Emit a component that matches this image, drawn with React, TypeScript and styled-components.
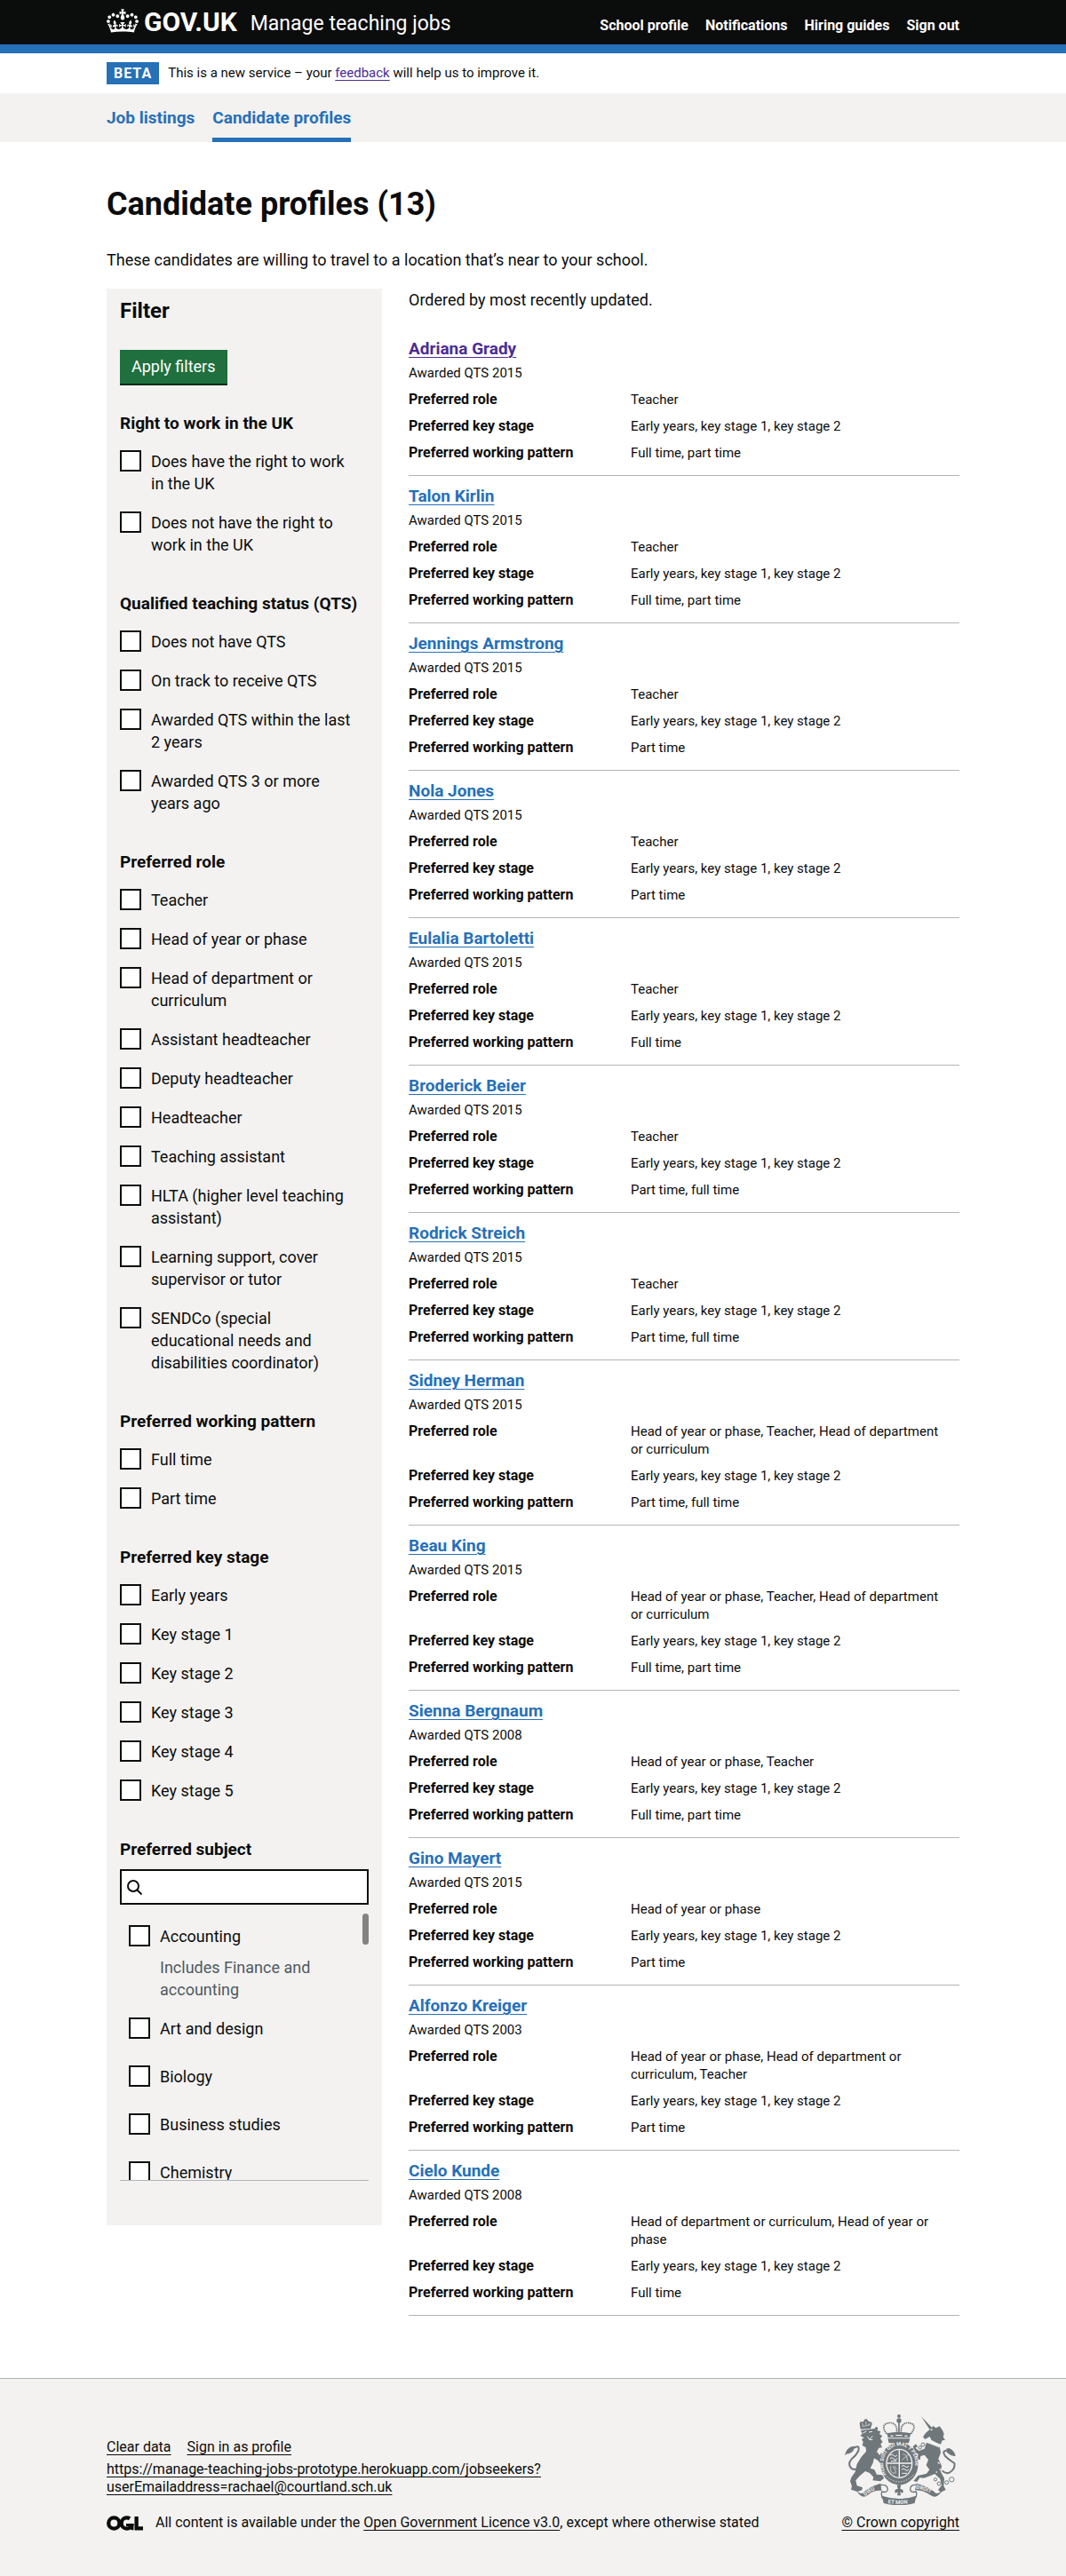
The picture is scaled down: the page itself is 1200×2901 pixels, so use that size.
import React from "react";
import styled, { createGlobalStyle } from "styled-components";

const ink = "#0b0c0c";
const blue = "#2670b8";
const green = "#1f703e";
const visited = "#4c2c92";
const pale = "#f3f2f1";
const rule = "#b1b4b6";
const slate = "#505a5f";
const sans = 'Roboto, "Liberation Sans", Arial, sans-serif';

const GlobalStyle = createGlobalStyle`
  *, *::before, *::after { box-sizing: border-box; }
  body {
    margin: 0;
    background: #ffffff;
    color: ${ink};
    font-family: ${sans};
    font-size: 18px;
    line-height: 25px;
  }
  h1, h2, h3, p, ul, dl, dd, fieldset { margin: 0; padding: 0; }
  fieldset { border: 0; min-width: 0; }
  ul { list-style: none; }
`;

const Container = styled.div`
  max-width: 1020px;
  margin: 0 auto;
  padding: 0 30px;
`;

const Header = styled.header`
  background: ${ink};
  border-bottom: 10px solid ${blue};
  color: #ffffff;
`;

const HeaderRow = styled(Container)`
  display: flex;
  flex-wrap: wrap;
  align-items: center;
  min-height: 50px;
`;

const HomeLink = styled.a`
  display: flex;
  align-items: flex-start;
  gap: 6px;
  color: #ffffff;
  font-size: 30px;
  font-weight: 700;
  line-height: 30px;
  text-decoration: none;
`;

const ServiceLink = styled.a`
  margin-left: 15px;
  padding-top: 4px;
  color: #ffffff;
  font-size: 23px;
  line-height: 30px;
  text-decoration: none;
`;

const HeaderNav = styled.nav`
  display: flex;
  gap: 19px;
  margin-left: auto;
  padding-top: 8px;
`;

const HeaderNavLink = styled.a`
  color: #ffffff;
  font-size: 16px;
  font-weight: 700;
  line-height: 20px;
  text-decoration: none;
`;

const PhaseBanner = styled(Container)`
  display: flex;
  align-items: center;
  gap: 10px;
  padding-top: 10px;
  padding-bottom: 10px;
  font-size: 15px;
`;

const Tag = styled.strong`
  padding: 0 8px;
  background: ${blue};
  color: #ffffff;
  font-size: 16px;
  line-height: 25px;
  letter-spacing: 1px;
`;

const TextLink = styled.a<{ $colour?: string }>`
  color: ${(p) => p.$colour ?? ink};
  text-decoration: underline;
  text-decoration-thickness: 1px;
  text-underline-offset: 3px;
`;

const PrimaryNav = styled.nav`
  background: ${pale};
`;

const PrimaryNavList = styled(Container).attrs({ as: "ul" })`
  display: flex;
  gap: 20px;
`;

const PrimaryNavLink = styled.a<{ $current?: boolean }>`
  display: block;
  padding: 15px 0 10px;
  border-bottom: 5px solid ${(p) => (p.$current ? blue : "transparent")};
  color: ${blue};
  font-size: 19px;
  font-weight: 700;
  text-decoration: none;
`;

const Main = styled(Container).attrs({ as: "main" })`
  padding-top: 50px;
  padding-bottom: 70px;
`;

const PageTitle = styled.h1`
  margin-bottom: 30px;
  font-size: 36px;
  line-height: 40px;
`;

const Columns = styled.div`
  display: grid;
  grid-template-columns: minmax(0, 310fr) minmax(0, 620fr);
  align-items: start;
  gap: 30px;
  margin-top: 20px;
  @media (max-width: 760px) {
    grid-template-columns: minmax(0, 1fr);
  }
`;

const FilterPanel = styled.form`
  padding: 10px 15px 50px;
  background: ${pale};
`;

const FilterTitle = styled.h2`
  margin-bottom: 29px;
  font-size: 24px;
  line-height: 30px;
`;

const ApplyButton = styled.button`
  display: block;
  margin: 0 0 32px;
  padding: 6px 13px 7px;
  border: 0;
  border-radius: 0;
  background: ${green};
  box-shadow: 0 2px 0 #002d18;
  color: #ffffff;
  font: inherit;
`;

const FilterGroup = styled.fieldset`
  & + & {
    margin-top: 30px;
  }
`;

const Legend = styled.legend`
  margin-bottom: 10px;
  padding: 0;
  font-size: 19px;
  font-weight: 700;
`;

const Option = styled.div<{ $roomy?: boolean }>`
  display: grid;
  grid-template-columns: 24px minmax(0, 1fr);
  column-gap: 11px;
  padding: 8px 15px ${(p) => (p.$roomy ? 21 : 11)}px 0;
`;

const Checkbox = styled.input`
  appearance: none;
  width: 24px;
  height: 24px;
  margin: 0;
  border: 2px solid ${ink};
  border-radius: 0;
  background: #ffffff;
`;

const Hint = styled.div`
  grid-column: 2;
  margin-top: 10px;
  margin-bottom: -10px;
  color: ${slate};
`;

const SearchBox = styled.div`
  display: flex;
  align-items: center;
  gap: 6px;
  height: 40px;
  padding: 0 5px;
  border: 2px solid ${ink};
  background: #ffffff;
`;

const SearchInput = styled.input`
  flex: 1;
  min-width: 0;
  height: 100%;
  padding: 0;
  border: 0;
  outline: 0;
  background: transparent;
  font: inherit;
`;

const SubjectArea = styled.div`
  position: relative;
  margin-top: 10px;
  border-bottom: 1px solid ${rule};
`;

const SubjectList = styled.div`
  height: 300px;
  padding: 5px 10px;
  overflow-y: auto;
  scrollbar-width: none;
`;

const ScrollThumb = styled.span`
  position: absolute;
  top: 0;
  right: 0;
  width: 7px;
  height: 35px;
  border-radius: 4px;
  background: #838382;
`;

const Results = styled.section`
  display: grid;
  gap: 30px;
`;

const Candidate = styled.li`
  padding-bottom: 15px;
  border-bottom: 1px solid ${rule};
  & + & {
    padding-top: 10px;
  }
`;

const CandidateName = styled.h3`
  margin-bottom: 5px;
  font-size: 19px;
  line-height: 25px;
`;

const Small = styled.p`
  font-size: 15px;
  line-height: 20px;
`;

const Details = styled.dl`
  display: grid;
  grid-template-columns: minmax(0, 250fr) minmax(0, 370fr);
  row-gap: 10px;
  margin-top: 10px;
  line-height: 20px;
`;

const Term = styled.dt`
  font-size: 16px;
  font-weight: 700;
`;

const Value = styled.dd`
  padding-right: 15px;
  font-size: 15px;
`;

const Footer = styled.footer`
  border-top: 1px solid ${rule};
  background: ${pale};
  font-size: 16px;
  line-height: 20px;
`;

const FooterRow = styled(Container)`
  display: flex;
  flex-wrap: wrap;
  align-items: flex-end;
  justify-content: space-between;
  gap: 30px;
  padding-top: 40px;
  padding-bottom: 50px;
`;

const FooterLinks = styled.div`
  display: flex;
  gap: 18px;
  margin-bottom: 5px;
`;

const FooterUrl = styled.p`
  max-width: 500px;
  margin-bottom: 20px;
`;

const Licence = styled.div`
  display: flex;
  align-items: center;
  gap: 14px;
`;

const Copyright = styled.a`
  display: grid;
  justify-items: center;
  gap: 10px;
  color: ${ink};
  text-decoration: underline;
  text-decoration-thickness: 1px;
  text-underline-offset: 3px;
`;

const Crown = () => (
  <svg width="36" height="27" viewBox="0 0 132 97" aria-hidden="true">
    <path
      fill="currentColor"
      d="M25 30.2c3.5 1.5 7.7-.2 9.1-3.7 1.5-3.6-.2-7.8-3.9-9.2-3.6-1.4-7.6.3-9.1 3.9-1.4 3.5.3 7.5 3.9 9zM9 39.5c3.6 1.5 7.8-.2 9.2-3.7 1.5-3.6-.2-7.8-3.9-9.1-3.6-1.5-7.6.2-9.1 3.8-1.4 3.5.3 7.5 3.8 9zM4.4 57.2c3.5 1.5 7.7-.2 9.1-3.8 1.5-3.6-.2-7.7-3.9-9.1-3.5-1.5-7.6.3-9.1 3.8-1.4 3.5.3 7.6 3.9 9.1zm38.3-21.4c3.5 1.5 7.7-.2 9.1-3.8 1.5-3.6-.2-7.7-3.9-9.1-3.6-1.5-7.6.3-9.1 3.8-1.3 3.6.4 7.7 3.9 9.1zm64.4-5.6c-3.6 1.5-7.8-.2-9.1-3.7-1.5-3.6.2-7.8 3.8-9.2 3.6-1.4 7.7.3 9.2 3.9 1.3 3.5-.4 7.5-3.9 9zm15.9 9.3c-3.6 1.5-7.7-.2-9.1-3.7-1.5-3.6.2-7.8 3.7-9.1 3.6-1.5 7.7.2 9.2 3.8 1.5 3.5-.3 7.5-3.8 9zm4.7 17.7c-3.6 1.5-7.8-.2-9.2-3.8-1.5-3.6.2-7.7 3.9-9.1 3.6-1.5 7.7.3 9.2 3.8 1.3 3.5-.4 7.6-3.9 9.1zM89.3 35.8c-3.6 1.5-7.8-.2-9.2-3.8-1.4-3.6.2-7.7 3.9-9.1 3.6-1.5 7.7.3 9.2 3.8 1.4 3.6-.3 7.7-3.9 9.1zM69.7 17.7l8.9 4.7V9.3l-8.9 2.8c-.2-.3-.5-.6-.9-.9L72.4 0H59.6l3.5 11.2c-.3.3-.6.5-.9.9l-8.8-2.8v13.1l8.8-4.7c.3.3.6.7.9.9l-5 15.4v.1c-.2.8-.4 1.6-.4 2.4 0 4.1 3.1 7.5 7 8.1h.2c.3 0 .7.1 1 .1.4 0 .7 0 1-.1h.2c4-.6 7.1-4.1 7.1-8.1 0-.8-.1-1.7-.4-2.4V34l-5.1-15.4c.4-.2.7-.6 1-.9zM66 92.8c16.9 0 32.8 1.1 47.1 3.2 4-16.9 8.9-26.7 14-33.5l-9.6-3.4c1 4.9 1.1 7.2 0 10.2-1.5-1.4-3-4.3-4.2-8.7L108.6 76c2.8-2 5-3.2 7.5-3.3-4.4 9.4-10 11.9-13.6 11.2-4.3-.8-6.3-4.6-5.6-7.9 1-4.7 5.7-5.9 8-.5 4.3-8.7-3-11.4-7.6-8.8 7.1-7.2 7.9-13.5 2.1-21.1-8 6.1-8.1 12.3-4.5 20.8-4.7-5.4-12.1-2.5-9.5 6.2 3.4-5.2 7.9-2 7.2 3.1-.6 4.3-6.4 7.8-13.5 7.2-10.3-.9-10.9-8-11.2-13.8 2.5-.5 7.1 1.8 11 7.3L80.2 60c-4.1 4.4-8 5.3-12.3 5.4 1.4-4.4 8-11.6 8-11.6H55.5s6.4 7.2 7.9 11.6c-4.2-.1-8-1-12.3-5.4l1.4 16.4c3.9-5.5 8.5-7.7 10.9-7.3-.3 5.8-.9 12.8-11.1 13.8-7.2.6-12.9-2.9-13.5-7.2-.7-5 3.8-8.3 7.1-3.1 2.7-8.7-4.6-11.6-9.4-6.2 3.7-8.5 3.6-14.7-4.6-20.8-5.8 7.6-5 13.9 2.2 21.1-4.7-2.6-11.9.1-7.7 8.8 2.3-5.5 7.1-4.2 8.1.5.7 3.3-1.3 7.1-5.7 7.9-3.5.7-9-1.8-13.5-11.2 2.5.1 4.7 1.3 7.5 3.3l-4.7-15.4c-1.2 4.4-2.7 7.2-4.3 8.7-1.1-3-.9-5.3 0-10.2l-9.5 3.4c5 6.9 9.9 16.7 14 33.5 14.8-2.1 30.8-3.2 47.7-3.2z"
    />
  </svg>
);

const SearchIcon = () => (
  <svg width="19" height="19" viewBox="0 0 19 19" fill="none" stroke={ink} strokeWidth="2" aria-hidden="true">
    <circle cx="8" cy="8" r="6" />
    <path d="M12.5 12.5 L17.5 17.5" />
  </svg>
);

const LicenceLogo = () => (
  <svg width="41" height="17" viewBox="0 0 483 196" fill="none" stroke={ink} strokeWidth="51" role="img" aria-label="OGL">
    <circle cx="98" cy="98" r="72" />
    <circle cx="268" cy="98" r="72" strokeDasharray="362 91" strokeDashoffset="-10" />
    <path d="M259 121 H340 V190" strokeWidth="36" />
    <path d="M396 10 V168 H483" />
  </svg>
);

/* Royal coat of arms: lion, crowned garter and shield, unicorn, motto scroll. */
const CoatOfArms = () => {
  const c = "#6f777b";
  return (
    <svg width="125" height="102" viewBox="276 236 375 306" aria-hidden="true">
      <g fill={c}>
        <path d="M329 286 L326 266 Q330 257 337 262 L344 252 L350 252 L358 261 Q368 259 368 268 L363 284 Z" />
        <path d="M330 290 L378 284 L380 277 L388 281 L386 291 L397 293 L393 303 L403 309 L396 318 L404 329 L397 336 L402 348 L391 349 L384 362 L394 374 L399 366 L407 378 L410 394 L400 407 L388 392 L375 384 L371 400 L362 418 L376 423 L384 439 L403 441 L408 452 L396 462 L370 459 L373 448 L360 434 L345 428 L327 443 L313 459 L317 477 L336 483 L334 492 L318 497 L297 490 L300 478 L294 462 L298 449 L311 430 L317 404 L331 381 L348 361 L347 348 L335 341 L338 329 L333 320 L341 315 L328 308 L335 302 Z" />
        <path d="M276 375 Q280 352 299 345 L310 343 L306 356 Q299 369 281 370 Z" />
        <path d="M650 377 Q646 357 628 350 L618 352 L622 366 Q631 375 646 377 Z" />
        <path d="M534 243 L574 285 L565 291 Z" />
        <path d="M566 284 L575 275 L583 282 L596 276 L606 289 L611 302 L608 312 L615 323 L605 324 L600 337 L586 332 L568 322 L563 311 L547 320 L540 312 L549 299 Z" />
        <path d="M552 331 L597 347 L600 366 L592 386 L603 410 L600 430 L612 452 L610 478 L617 491 L600 499 L591 491 L603 475 L598 454 L580 437 L560 445 L543 451 L529 450 L520 464 L508 461 L523 443 L552 436 L562 423 L551 408 L558 389 L545 373 L532 377 L530 390 L519 386 L524 371 L511 361 L506 344 L516 336 L522 345 L514 349 L527 359 L545 352 Z" />
        <path d="M316 495 Q333 509 341 498 Q355 482 397 469 L400 494 Q375 491 352 510 Q333 523 316 495 Z" />
        <path d="M604 495 Q586 509 578 498 Q563 482 518 469 L513 492 Q541 491 567 510 Q587 523 604 495 Z" />
        <path d="M402 511 Q459 531 517 511 L512 536 Q459 550 407 536 Z" />
        <path d="M421 318 H496 L492 333 H425 Z" />
        <path d="M418 300 Q458 291 499 300 L495 315 H422 Z" />
        <circle cx="459" cy="242" r="6" />
        <circle cx="459" cy="257" r="8" />
        <path d="M452 474 H466 L463 488 Q478 489 471 502 L463 498 L465 510 H453 L455 498 L447 502 Q440 489 455 488 Z" />
      </g>
      <g fill="none" stroke={c} strokeWidth="4">
        <path d="M306 350 Q327 336 322 359 Q315 374 299 387 Q285 402 296 416 Q306 428 324 416" strokeWidth="6" />
        <path d="M622 360 Q602 356 615 377 Q628 390 646 401 Q650 421 629 433 Q616 438 605 426" strokeWidth="6" />
        <path d="M418 302 Q398 276 416 267 Q443 258 451 281 L452 299 M499 302 Q519 276 502 267 Q475 258 467 281 L466 299" strokeDasharray="5 2" strokeWidth="5" />
        <path d="M459 260 V310" strokeWidth="5" />
        <path d="M395 475 Q419 471 421 489 Q421 502 401 497 Q397 515 407 522 M522 475 Q497 471 497 489 Q498 502 517 497 Q521 515 512 522" />
        <circle cx="582" cy="456" r="5" strokeWidth="3" />
        <circle cx="594" cy="470" r="6" strokeWidth="3" />
        <circle cx="620" cy="466" r="6" strokeWidth="3" />
        <circle cx="637" cy="456" r="8" strokeWidth="3" />
        <circle cx="540" cy="338" r="6" fill={pale} strokeWidth="3" />
        <circle cx="530" cy="348" r="5" fill={pale} strokeWidth="3" />
      </g>
      <ellipse cx="460" cy="402" rx="64" ry="72" fill={c} />
      <ellipse cx="460" cy="402" rx="45" ry="50" fill={pale} />
      <ellipse cx="460" cy="402" rx="41" ry="46" fill={c} />
      <g fill="none" stroke={pale} strokeWidth="3">
        <path d="M460 356 V448 M419 401 H501" strokeWidth="4" />
        <path d="M429 375 q6 -8 12 0 t12 -2 M429 386 q6 -8 12 0 t12 -2 M432 394 h19 M468 412 q6 -8 12 0 t12 -2 M468 423 q6 -8 12 0 t12 -2 M469 435 h17" />
        <path d="M472 370 Q488 370 487 393 M469 390 L492 371 M431 411 V427 Q437 438 449 434 M438 410 L449 432 M444 410 L450 421" strokeWidth="2" />
        <path d="M410 439 Q458 489 510 439" strokeDasharray="4 5" />
        <path d="M335 277 L361 271 M334 266 L338 274 M347 260 L348 271 M361 266 L356 272" strokeWidth="2" />
        <path d="M337 299 L349 293 M357 296 L369 294 M352 310 L359 321 L370 309 M360 322 L370 321" strokeWidth="3" />
        <path d="M553 330 L601 350 M558 326 L604 342" strokeDasharray="5 3" />
        <path d="M430 309 h10 m8 -2 h22 m8 2 h10" strokeWidth="4" />
        <path d="M596 421 l6 3 M590 398 l6 4 M584 430 l4 2 M565 287 l7 1" strokeWidth="4" />
      </g>
      <defs>
        <path id="garter" d="M416 438 A54 61 0 1 1 504 438" />
        <path id="motto-left" d="M345 512 Q366 490 402 487" />
        <path id="motto-right" d="M516 487 Q550 490 580 514" />
        <path id="motto-mid" d="M414 535 Q459 543 508 535" />
      </defs>
      <g fill={pale} fontFamily={sans} fontSize="18" fontWeight="700">
        <text fontSize="17"><textPath href="#garter">HONI SOIT QUI MAL Y PENSE</textPath></text>
        <text><textPath href="#motto-left">DIEU</textPath></text>
        <text><textPath href="#motto-mid" startOffset="8">ET MON</textPath></text>
        <text><textPath href="#motto-right">DROIT</textPath></text>
      </g>
    </svg>
  );
};

type Choice = { label: string; hint?: string };

const choices = (...labels: string[]): Choice[] => labels.map((label) => ({ label }));

const groups: { title: string; options: Choice[] }[] = [
  {
    title: "Right to work in the UK",
    options: choices("Does have the right to work in the UK", "Does not have the right to work in the UK"),
  },
  {
    title: "Qualified teaching status (QTS)",
    options: choices(
      "Does not have QTS",
      "On track to receive QTS",
      "Awarded QTS within the last 2 years",
      "Awarded QTS 3 or more years ago"
    ),
  },
  {
    title: "Preferred role",
    options: choices(
      "Teacher",
      "Head of year or phase",
      "Head of department or curriculum",
      "Assistant headteacher",
      "Deputy headteacher",
      "Headteacher",
      "Teaching assistant",
      "HLTA (higher level teaching assistant)",
      "Learning support, cover supervisor or tutor",
      "SENDCo (special educational needs and disabilities coordinator)"
    ),
  },
  { title: "Preferred working pattern", options: choices("Full time", "Part time") },
  {
    title: "Preferred key stage",
    options: choices("Early years", "Key stage 1", "Key stage 2", "Key stage 3", "Key stage 4", "Key stage 5"),
  },
];

const subjects: Choice[] = [
  { label: "Accounting", hint: "Includes Finance and accounting" },
  ...choices("Art and design", "Biology", "Business studies", "Chemistry"),
];

const candidates: [name: string, year: number, role: string, pattern: string][] = [
  ["Adriana Grady", 2015, "Teacher", "Full time, part time"],
  ["Talon Kirlin", 2015, "Teacher", "Full time, part time"],
  ["Jennings Armstrong", 2015, "Teacher", "Part time"],
  ["Nola Jones", 2015, "Teacher", "Part time"],
  ["Eulalia Bartoletti", 2015, "Teacher", "Full time"],
  ["Broderick Beier", 2015, "Teacher", "Part time, full time"],
  ["Rodrick Streich", 2015, "Teacher", "Part time, full time"],
  ["Sidney Herman", 2015, "Head of year or phase, Teacher, Head of department or curriculum", "Part time, full time"],
  ["Beau King", 2015, "Head of year or phase, Teacher, Head of department or curriculum", "Full time, part time"],
  ["Sienna Bergnaum", 2008, "Head of year or phase, Teacher", "Full time, part time"],
  ["Gino Mayert", 2015, "Head of year or phase", "Part time"],
  ["Alfonzo Kreiger", 2003, "Head of year or phase, Head of department or curriculum, Teacher", "Part time"],
  ["Cielo Kunde", 2008, "Head of department or curriculum, Head of year or phase", "Full time"],
];

const slug = (text: string) => text.toLowerCase().replace(/[^a-z0-9]+/g, "-");

const CheckOption = ({ group, choice, roomy }: { group: string; choice: Choice; roomy?: boolean }) => {
  const id = slug(`${group} ${choice.label}`);
  return (
    <Option $roomy={roomy}>
      <Checkbox type="checkbox" id={id} aria-describedby={choice.hint ? `${id}-hint` : undefined} />
      <label htmlFor={id}>{choice.label}</label>
      {choice.hint && <Hint id={`${id}-hint`}>{choice.hint}</Hint>}
    </Option>
  );
};

export default function App() {
  return (
    <>
      <GlobalStyle />
      <Header>
        <HeaderRow>
          <HomeLink href="#">
            <Crown />
            <span>GOV.UK</span>
          </HomeLink>
          <ServiceLink href="#">Manage teaching jobs</ServiceLink>
          <HeaderNav aria-label="Account">
            {["School profile", "Notifications", "Hiring guides", "Sign out"].map((item) => (
              <HeaderNavLink key={item} href="#">{item}</HeaderNavLink>
            ))}
          </HeaderNav>
        </HeaderRow>
      </Header>
      <PhaseBanner>
        <Tag>BETA</Tag>
        <span>
          This is a new service – your <TextLink href="#" $colour={visited}>feedback</TextLink> will help us to improve it.
        </span>
      </PhaseBanner>
      <PrimaryNav aria-label="Primary">
        <PrimaryNavList>
          <li><PrimaryNavLink href="#">Job listings</PrimaryNavLink></li>
          <li><PrimaryNavLink href="#" $current aria-current="page">Candidate profiles</PrimaryNavLink></li>
        </PrimaryNavList>
      </PrimaryNav>
      <Main>
        <PageTitle>Candidate profiles (13)</PageTitle>
        <p>These candidates are willing to travel to a location that’s near to your school.</p>
        <Columns>
          <FilterPanel onSubmit={(e) => e.preventDefault()}>
            <FilterTitle>Filter</FilterTitle>
            <ApplyButton type="submit">Apply filters</ApplyButton>
            {groups.map((group) => (
              <FilterGroup key={group.title}>
                <Legend>{group.title}</Legend>
                {group.options.map((choice) => (
                  <CheckOption key={choice.label} group={group.title} choice={choice} />
                ))}
              </FilterGroup>
            ))}
            <FilterGroup>
              <Legend>Preferred subject</Legend>
              <SearchBox>
                <SearchIcon />
                <SearchInput type="text" aria-label="Search subjects" />
              </SearchBox>
              <SubjectArea>
                <SubjectList>
                  {subjects.map((choice) => (
                    <CheckOption key={choice.label} group="subject" choice={choice} roomy />
                  ))}
                </SubjectList>
                <ScrollThumb />
              </SubjectArea>
            </FilterGroup>
          </FilterPanel>
          <Results>
            <p>Ordered by most recently updated.</p>
            <ul>
              {candidates.map(([name, year, role, pattern], index) => (
                <Candidate key={name}>
                  <CandidateName>
                    <TextLink href="#" $colour={index === 0 ? visited : blue}>{name}</TextLink>
                  </CandidateName>
                  <Small>Awarded QTS {year}</Small>
                  <Details>
                    <Term>Preferred role</Term>
                    <Value>{role}</Value>
                    <Term>Preferred key stage</Term>
                    <Value>Early years, key stage 1, key stage 2</Value>
                    <Term>Preferred working pattern</Term>
                    <Value>{pattern}</Value>
                  </Details>
                </Candidate>
              ))}
            </ul>
          </Results>
        </Columns>
      </Main>
      <Footer>
        <FooterRow>
          <div>
            <FooterLinks>
              <TextLink href="#">Clear data</TextLink>
              <TextLink href="#">Sign in as profile</TextLink>
            </FooterLinks>
            <FooterUrl>
              <TextLink href="#">
                https://manage-teaching-jobs-prototype.herokuapp.com/jobseekers?<wbr />userEmailaddress=rachael@courtland.sch.uk
              </TextLink>
            </FooterUrl>
            <Licence>
              <LicenceLogo />
              <span>
                All content is available under the <TextLink href="#">Open Government Licence v3.0</TextLink>, except where otherwise stated
              </span>
            </Licence>
          </div>
          <Copyright href="#">
            <CoatOfArms />
            <span>© Crown copyright</span>
          </Copyright>
        </FooterRow>
      </Footer>
    </>
  );
}
